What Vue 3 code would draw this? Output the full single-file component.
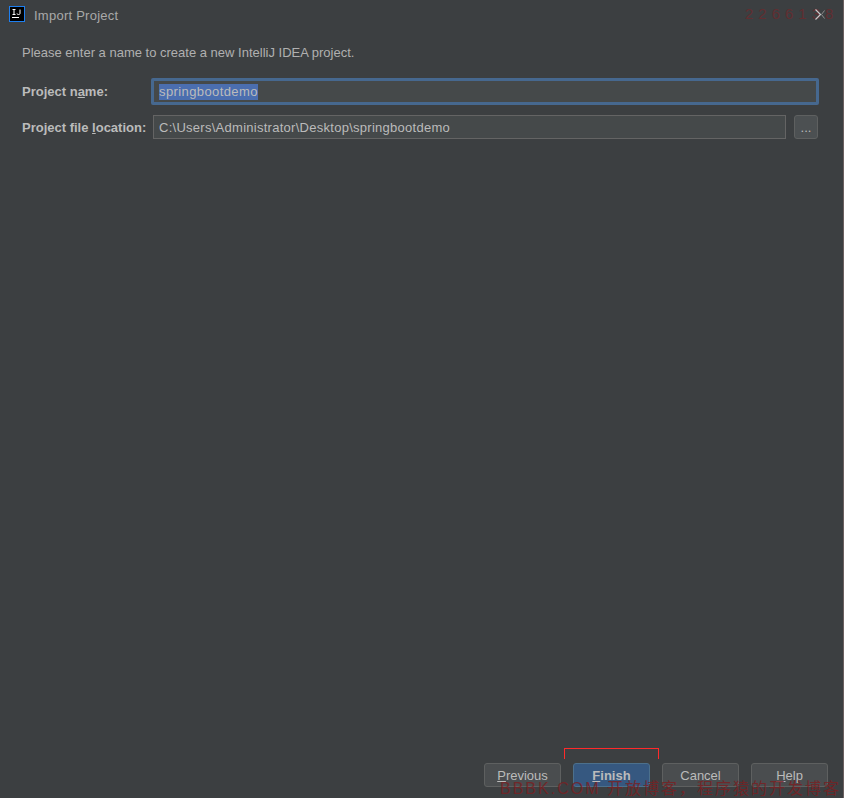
<script setup>
const buttons = [
  { key: 'P', after: 'revious', primary: false },
  { key: 'F', after: 'inish', primary: true },
  { key: '', after: 'Cancel', primary: false },
  { key: 'H', after: 'elp', primary: false }
]
</script>

<template>
  <div class="dialog">
    <header class="title">
      <svg class="logo" width="16" height="16" viewBox="0 0 16 16">
        <rect x="0.5" y="0.5" width="15" height="15" fill="#000" stroke="#1e7ff0" />
        <rect x="3" y="11" width="7" height="1" fill="#fff" />
        <path d="M3.500 3.500h3M5 3.500v5M3.500 8.500h3M8 7.500q0 1 1.500 1t1.500-1V3.500" fill="none" stroke="#fff" stroke-width="1" />
      </svg>
      <span class="title-text">Import Project</span>
      <span class="mark-top">2266138</span>
      <svg class="close" width="10" height="11" viewBox="0 0 10 11">
        <path d="M0.500 0.500L5.500 5.500L0.500 10.500" fill="none" stroke="#c8c8c8" stroke-width="1.200" />
        <path d="M9.500 1.500L6.500 5.500L9.500 9.500" fill="none" stroke="#8a8a8a" stroke-width="1" />
      </svg>
    </header>

    <main class="body">
      <p class="intro">Please enter a name to create a new IntelliJ IDEA project.</p>
      <div class="form">
        <label class="label">Project n<u>a</u>me:</label>
        <div class="input focused"><span class="selected">springbootdemo</span></div>
        <label class="label">Project file <u>l</u>ocation:</label>
        <div class="path-row">
          <div class="input">C:\Users\Administrator\Desktop\springbootdemo</div>
          <button class="browse">...</button>
        </div>
      </div>
    </main>

    <footer class="footer">
      <button v-for="b in buttons" :key="b.after" class="btn" :class="{ primary: b.primary }"><u>{{ b.key }}</u>{{ b.after }}</button>
      <span class="callout"></span>
      <span class="mark-bottom">BBBK.COM 开放博客，程序猿的开发博客</span>
    </footer>
  </div>
</template>

<style>
html, body { margin: 0; background: #3c3f41; }
</style>

<style scoped>
.dialog {
  width: 844px;
  height: 798px;
  box-sizing: border-box;
  background: #3c3f41;
  color: #bbbbbb;
  font: 13px "Liberation Sans", "Noto Sans CJK SC", sans-serif;
  display: flex;
  flex-direction: column;
  position: relative;
  overflow: hidden;
  border-right: 1px solid #6b6060;
}
.title {
  height: 30px;
  display: flex;
  align-items: center;
  padding-left: 9px;
  position: relative;
}
.logo { margin: -2px 9px 0 0; }
.title-text { color: #a9a9a9; font-size: 13px; letter-spacing: 0.25px; }
.close { position: absolute; left: 815px; top: 9px; }
.mark-top {
  position: absolute;
  left: 745px;
  top: 5px;
  color: #7a2428;
  opacity: 0.6;
  font-size: 15px;
  letter-spacing: 5px;
  white-space: nowrap;
}
.body { flex: 1; padding: 15px 25px 0 22px; }
.intro { margin: 0 0 17px; line-height: 16px; color: #b0b0b0; }
.form {
  display: grid;
  grid-template-columns: 131px 1fr;
  row-gap: 10px;
  align-items: center;
}
.label { font-weight: 700; color: #bbbbbb; white-space: nowrap; }
.input {
  height: 24px;
  box-sizing: border-box;
  background: #45494a;
  border: 1px solid #646464;
  padding-left: 5px;
  display: flex;
  align-items: center;
  flex: 1;
  letter-spacing: 0.27px;
}
.focused {
  border: 3px solid #46688f;
  border-radius: 2px;
  height: 27px;
  padding-left: 5px;
  margin: 0 -1px 0 -2px;
  letter-spacing: 0.4px;
}
.selected { background: #4b6eaf; color: #bbbbbb; line-height: 16px; }
.path-row { display: flex; align-items: center; gap: 8px; }
.browse {
  width: 24px;
  height: 24px;
  padding: 0;
  background: #4c5052;
  border: 1px solid #5e6060;
  border-radius: 3px;
  color: #bbbbbb;
  font: 13px "Liberation Sans", sans-serif;
}
.footer {
  height: 35px;
  display: flex;
  gap: 12px;
  padding-left: 484px;
  align-items: flex-start;
  position: relative;
}
.btn {
  width: 77px;
  height: 24px;
  padding: 0;
  background: #4a4d4f;
  border: 1px solid #5e6060;
  border-radius: 3px;
  color: #bbbbbb;
  font: 13px "Liberation Sans", sans-serif;
}
.btn.primary { background: #365880; border-color: #4c708c; font-weight: 700; }
.callout {
  position: absolute;
  left: 564px;
  top: -15px;
  width: 93px;
  height: 10px;
  border: 1px solid #ff2a2a;
  border-bottom: none;
}
.mark-bottom {
  position: absolute;
  left: 500px;
  top: 17px;
  color: #7a2022;
  opacity: 0.8;
  font-size: 16px;
  line-height: 17px;
  white-space: nowrap;
  letter-spacing: 2px;
}
</style>
